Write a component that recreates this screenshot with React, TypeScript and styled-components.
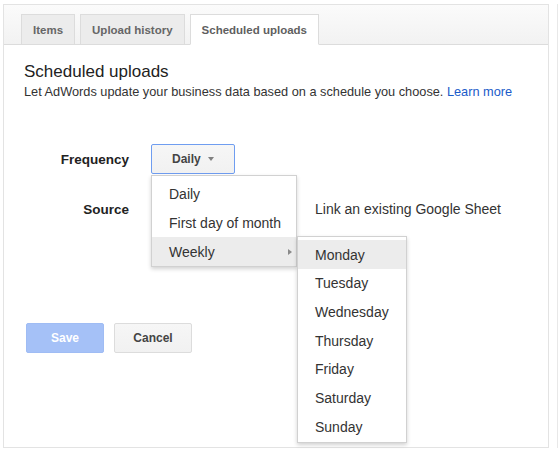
import React from "react";
import styled, { createGlobalStyle, css } from "styled-components";

const Global = createGlobalStyle`
  html, body { margin: 0; padding: 0; background: #fff; }
  body {
    font-family: "Liberation Sans", Arial, sans-serif;
    width: 560px;
    height: 462px;
    overflow: hidden;
  }
  * { box-sizing: border-box; }
`;

const Frame = styled.div`
  width: 555px;
  margin: 4px 0 0 3px;
  border-right: 1px solid #e8e8e8;
  display: flex;
`;

const Panel = styled.div`
  width: 546px;
  height: 444px;
  border: 1px solid #e3e3e3;
  background: #fff;
  display: flex;
  flex-direction: column;
`;

const TabStrip = styled.div`
  display: flex;
  align-items: flex-end;
  gap: 5px;
  height: 40px;
  padding-left: 17px;
  border-bottom: 1px solid #dcdcdc;
  background: linear-gradient(#fbfbfb, #f2f2f2);
`;

const Tab = styled.div<{ $active?: boolean }>`
  height: 31px;
  margin-bottom: -1px;
  padding: 0 11px;
  display: flex;
  align-items: center;
  font-size: 11.5px;
  font-weight: bold;
  color: #666;
  border: 1px solid #dcdcdc;
  background: #ececec;
  ${(p) =>
    p.$active &&
    css`
      background: #fff;
      border-bottom-color: #fff;
      color: #5f5f5f;
    `}
`;

const Content = styled.div`
  padding: 17px 20px 0;
  display: flex;
  flex-direction: column;
`;

const Heading = styled.h2`
  margin: 0;
  font-size: 17px;
  line-height: 20px;
  font-weight: normal;
  color: #222;
`;

const Description = styled.p`
  margin: 2px 0 0;
  font-size: 12.75px;
  line-height: 16px;
  color: #333;
`;

const Link = styled.a`
  color: #1a5bc9;
  text-decoration: none;
`;

const Form = styled.div`
  margin-top: 44px;
  display: grid;
  grid-template-columns: 106px auto;
  column-gap: 21px;
  row-gap: 20px;
  align-items: center;
`;

const Label = styled.div`
  text-align: right;
  font-size: 13.5px;
  font-weight: bold;
  color: #222;
  padding-right: 1px;
`;

const Control = styled.div`
  position: relative;
  display: flex;
  align-items: center;
  height: 30px;
`;

const DropButton = styled.div<{ $focused?: boolean; $width?: number }>`
  height: 30px;
  padding: 0 20px;
  display: inline-flex;
  align-items: center;
  gap: 7px;
  border: 1px solid ${(p) => (p.$focused ? "#6f9df0" : "#dcdcdc")};
  border-radius: 2px;
  background: linear-gradient(#f6f6f6, #f1f1f1);
  font-size: 12px;
  font-weight: bold;
  color: #444;
  width: ${(p) => (p.$width ? `${p.$width}px` : "auto")};
`;

const Caret = styled.span`
  width: 0;
  height: 0;
  border-left: 3.5px solid transparent;
  border-right: 3.5px solid transparent;
  border-top: 4px solid #808080;
`;

const SideArrow = styled.span`
  width: 0;
  height: 0;
  border-top: 3.5px solid transparent;
  border-bottom: 3.5px solid transparent;
  border-left: 4px solid #8a8a8a;
`;

const Menu = styled.div<{ $width: number }>`
  position: absolute;
  z-index: 10;
  width: ${(p) => p.$width}px;
  background: #fff;
  border: 1px solid rgba(0, 0, 0, 0.18);
  box-shadow: 0 2px 4px rgba(0, 0, 0, 0.18);
`;

const MainMenu = styled(Menu)`
  top: 31px;
  left: 0;
  padding: 4px 0 0;
`;

const SubMenu = styled(Menu)`
  top: -1px;
  left: calc(100% + 1px);
  padding: 3px 0 1px;
`;

const MenuItem = styled.div<{ $highlight?: boolean; $arrow?: boolean }>`
  position: relative;
  height: 28.67px;
  display: flex;
  align-items: center;
  justify-content: space-between;
  padding: 0 ${(p) => (p.$arrow ? "4px" : "17px")} 0 17px;
  font-size: 14px;
  color: #333;
  white-space: nowrap;
  background: ${(p) => (p.$highlight ? "#ececec" : "transparent")};
`;

const SheetText = styled.span`
  margin-left: 18px;
  font-size: 14px;
  color: #333;
`;

const Actions = styled.div`
  margin: 99px 0 0 2px;
  display: flex;
  gap: 10px;
`;

const Button = styled.div<{ $primary?: boolean }>`
  width: 78px;
  height: 30px;
  display: flex;
  align-items: center;
  justify-content: center;
  border-radius: 2px;
  font-size: 12px;
  font-weight: bold;
  ${(p) =>
    p.$primary
      ? css`
          background: #a5c1f7;
          border: 1px solid #9fbcf4;
          color: #fff;
        `
      : css`
          background: linear-gradient(#f6f6f6, #f1f1f1);
          border: 1px solid #dcdcdc;
          color: #444;
        `}
`;

const days = ["Monday", "Tuesday", "Wednesday", "Thursday", "Friday", "Saturday", "Sunday"];

export default function App() {
  return (
    <>
      <Global />
      <Frame>
        <Panel>
          <TabStrip>
            <Tab>Items</Tab>
            <Tab>Upload history</Tab>
            <Tab $active>Scheduled uploads</Tab>
          </TabStrip>
          <Content>
            <Heading>Scheduled uploads</Heading>
            <Description>
              Let AdWords update your business data based on a schedule you choose.{" "}
              <Link href="#">Learn more</Link>
            </Description>
            <Form>
              <Label>Frequency</Label>
              <Control>
                <DropButton $focused>
                  Daily <Caret />
                </DropButton>
                <MainMenu $width={146}>
                  <MenuItem>Daily</MenuItem>
                  <MenuItem>First day of month</MenuItem>
                  <MenuItem $highlight $arrow>
                    Weekly <SideArrow />
                    <SubMenu $width={110}>
                      {days.map((d, i) => (
                        <MenuItem key={d} $highlight={i === 0}>
                          {d}
                        </MenuItem>
                      ))}
                    </SubMenu>
                  </MenuItem>
                </MainMenu>
              </Control>
              <Label>Source</Label>
              <Control>
                <DropButton $width={146}>Google Sheets</DropButton>
                <SheetText>Link an existing Google Sheet</SheetText>
              </Control>
            </Form>
            <Actions>
              <Button $primary>Save</Button>
              <Button>Cancel</Button>
            </Actions>
          </Content>
        </Panel>
      </Frame>
    </>
  );
}
